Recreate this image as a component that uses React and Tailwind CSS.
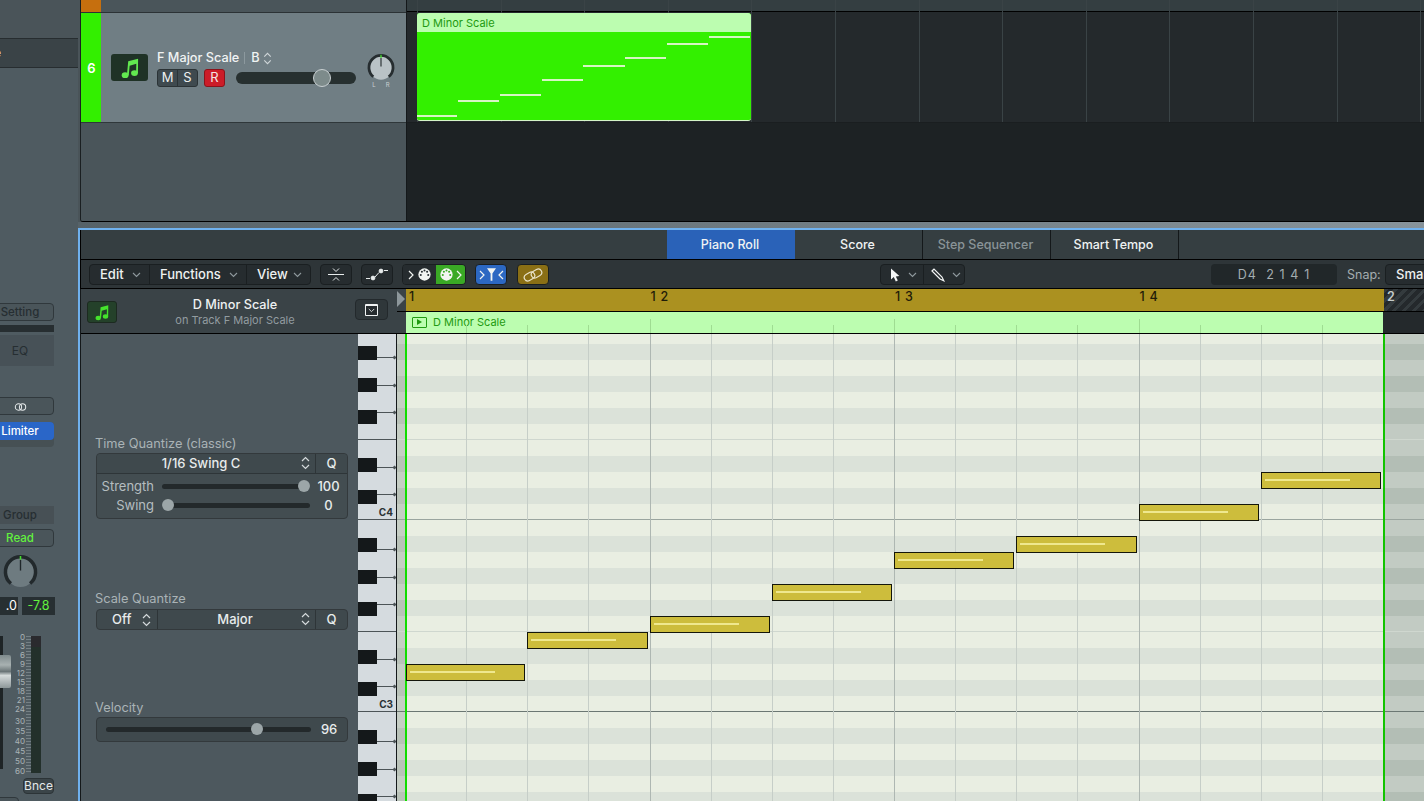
import React from "react";

function Note({ className }) {
  return (
    <svg viewBox="0 0 20 24" className={className} fill="currentColor">
      <ellipse cx="4.6" cy="20" rx="3.8" ry="3.2" />
      <ellipse cx="15" cy="17.6" rx="3.8" ry="3.2" />
      <path d="M6.6 20 L8 4.6 L19 1.6 L18.8 17.6 L16.8 17.6 L17 7.4 L9.6 9.4 L8.6 20 Z" />
    </svg>
  );
}

function UpDown({ className = "w-[9px] h-[14px] text-[#d5dadc]" }) {
  return (
    <svg viewBox="0 0 9 14" className={className} fill="none" stroke="currentColor" strokeWidth="1.2">
      <path d="M1 5 L4.5 1.5 L8 5 M1 9 L4.5 12.5 L8 9" />
    </svg>
  );
}

function Chev({ className = "w-[9px] h-[6px] text-[#8f999d]" }) {
  return (
    <svg viewBox="0 0 9 6" className={className} fill="none" stroke="currentColor" strokeWidth="1.1">
      <path d="M1 1 L4.5 4.5 L8 1" />
    </svg>
  );
}

function Din({ dark }) {
  const dot = dark ? "#3aa925" : "#2b3235";
  return (
    <svg viewBox="0 0 14 14" className="w-[13px] h-[13px]">
      <circle cx="7" cy="7" r="6.6" fill="#f2f5f2" />
      <circle cx="3" cy="7.6" r="1.1" fill={dot} />
      <circle cx="4.2" cy="4" r="1.1" fill={dot} />
      <circle cx="7" cy="2.8" r="1.1" fill={dot} />
      <circle cx="9.8" cy="4" r="1.1" fill={dot} />
      <circle cx="11" cy="7.6" r="1.1" fill={dot} />
    </svg>
  );
}

function Arrow({ flip }) {
  return (
    <svg viewBox="0 0 6 10" className="w-[6px] h-[10px]" fill="none" stroke="#f2f5f2" strokeWidth="1.2">
      <path d={flip ? "M5 1 L1 5 L5 9" : "M1 1 L5 5 L1 9"} />
    </svg>
  );
}

function Knob({ size, inner, ring }) {
  return (
    <svg viewBox="0 0 36 36" className={size}>
      <circle cx="18" cy="18" r="15" fill={inner} />
      <path d="M8.1 29.3 A15.5 15.5 0 1 1 27.9 29.3" fill="none" stroke={ring} strokeWidth="3.6" />
      <path d="M18 1 V5" stroke="#43e02c" strokeWidth="1.6" />
      <path d="M18 5 V16" stroke="#20272a" strokeWidth="1.4" />
    </svg>
  );
}

function Slider({ knob }) {
  return (
    <div className="relative flex-1 h-[5px] rounded-full bg-[#23292b]">
      <div className={"absolute -top-[4px] w-[12px] h-[12px] rounded-full bg-[#9ca6a8] " + knob} />
    </div>
  );
}

function Label({ children, className = "" }) {
  return <div className={"h-[16px] -ml-[1px] leading-[16px] text-[12.8px] text-[#aab3b6] " + className}>{children}</div>;
}

const barLines = [0, 1, 2, 3, 4, 5, 6, 7, 8, 9, 10, 11, 12];
const scaleMarks = [
  ["0", "h-[9px]"], ["3", "h-[9px]"], ["6", "h-[9px]"], ["9", "h-[9px]"], ["12", "h-[9px]"],
  ["15", "h-[9px]"], ["18", "h-[9px]"], ["21", "h-[9px]"], ["24", "h-[12px]"], ["30", "h-[10px]"],
  ["35", "h-[10px]"], ["40", "h-[10px]"], ["45", "h-[10px]"], ["50", "h-[10px]"], ["60", "h-[9px]"],
];
const miniNotes = [
  [0, 40, 102], [41, 41, 87], [83, 41, 81], [125, 41, 66], [166, 42, 52], [208, 41, 44], [250, 41, 30], [292, 41, 23],
];
const notes = [
  [9, 119, 330], [130, 121, 298], [253, 120, 282], [375, 120, 250],
  [497, 120, 218], [619, 121, 202], [742, 120, 170], [864, 120, 138],
];
// semitones above C3 for each row under the ruler, top row is cut off
const rows = Array.from({ length: 30 }, (_, i) => {
  const s = 23 - i;
  return { s, pc: ((s % 12) + 12) % 12, first: i === 0 };
});
const blackKeys = { 1: "top-[6px]", 3: "top-[11px]", 6: "top-[4px]", 8: "top-[9px]", 10: "top-[13px]" };

function MixerStrip() {
  const btn = "w-[68px] -ml-[14px] h-[18px] pt-[1px] rounded-[4px] border border-[#30383c] bg-[#4a555a] flex items-center justify-center";
  return (
    <div className="w-[78px] shrink-0 h-full bg-[#4f5b61] overflow-hidden flex flex-col text-[11.5px] text-[#bac2c5]">
      <div className="h-[39px] shrink-0 bg-[#4a5459] border-b border-[#272d30]" />
      <div className="h-[29px] shrink-0 bg-[#3a4347] border-b border-[#272d30] flex items-center -ml-[6px] text-[12px] text-white">e</div>
      <div className={btn + " mt-[235px] shrink-0 font-medium text-[#262e32]"}>Setting</div>
      <div className="w-[54px] h-[7px] mt-[4px] shrink-0 bg-[#272e31]" />
      <div className="w-[68px] -ml-[14px] h-[31px] pt-[1px] mt-[3px] shrink-0 bg-[#475157] flex items-center justify-center text-[12px] text-[#262e32]">EQ</div>
      <div className={btn + " mt-[31px] shrink-0"}>
        <svg viewBox="0 0 14 8" className="w-[13px] h-[8px]" fill="none" stroke="#e6eaeb" strokeWidth="1.1">
          <circle cx="4.8" cy="4" r="3.4" />
          <circle cx="9.2" cy="4" r="3.4" />
        </svg>
      </div>
      <div className="w-[68px] -ml-[14px] mt-[7px] h-[25px] shrink-0 rounded-[4px] bg-[#465054]">
        <div className="h-[18px] pt-[2px] rounded-[4px] bg-[#2a66c8] text-white font-medium flex items-center justify-center">Limiter</div>
      </div>
      <div className="w-[68px] -ml-[14px] h-[18px] pt-[2px] mt-[59px] shrink-0 bg-[#475055] flex items-center justify-center font-medium text-[#262e32]">Group</div>
      <div className={btn + " mt-[5px] shrink-0 font-medium text-[#62f23e]"}>Read</div>
      <div className="mt-[8px] ml-[3px] shrink-0 h-[35px]">
        <Knob size="w-[35px] h-[35px]" inner="#6e7b80" ring="#22292c" />
      </div>
      <div className="mt-[7px] h-[18px] shrink-0 flex gap-[4px] text-[12.5px]">
        <div className="w-[18px] bg-[#272f32] text-white text-right pr-[1px] leading-[18px]">.0</div>
        <div className="w-[33px] bg-[#272f32] text-[#62f23e] text-center leading-[18px]">-7.8</div>
      </div>
      <div className="mt-[21px] h-[137px] shrink-0 flex">
        <div className="relative w-[3px] h-[133px] bg-[#1e2426]">
          <div className="absolute left-0 top-[19px] w-[11px] h-[33px] rounded-r-[2px] bg-[linear-gradient(180deg,#7f8b8d,#a8b1b1_30%,#6a7577_50%,#d5dbdb_62%,#8d9799)]" />
        </div>
        <div className="w-[23px] -mt-[3px] flex flex-col items-end text-[8px] text-[#aab3b6]">
          {scaleMarks.map(([t, h]) => (
            <div key={t} className={h + " shrink-0 leading-[9px] pr-[1px]"}>{t}</div>
          ))}
        </div>
        <div className="w-[5px] bg-[repeating-linear-gradient(180deg,#8f9a9e_0,#8f9a9e_1px,transparent_1px,transparent_3px)] opacity-60" />
        <div className="w-[10px] bg-[#23302b]">
          <div className="h-[11px] bg-[#2a2a2e]" />
        </div>
      </div>
      <div className="mt-[5px] ml-[23px] w-[31px] h-[16px] shrink-0 rounded-[4px] border border-[#2c3437] bg-[#3b4549] flex items-center justify-center text-[12px] text-[#e4e8e9]">Bnce</div>
      <div className="mt-[3px] -ml-[6px] w-[25px] h-[10px] shrink-0 rounded-[4px] border border-[#30383c] bg-[#4a555a]" />
    </div>
  );
}

function Tracks() {
  return (
    <div className="h-[222px] shrink-0 flex rounded-bl-[3px] overflow-hidden border-b border-black border-l border-l-[#1a1f21]">
      <div className="w-[326px] shrink-0 flex flex-col bg-[#4a555a] border-r border-[#14181a]">
        <div className="h-[13px] shrink-0 flex border-b border-[#2b3235]">
          <div className="w-[20px] bg-[#c66f0e]" />
        </div>
        <div className="h-[110px] shrink-0 flex bg-[#707e84] border-b border-[#2f373a]">
          <div className="w-[20px] pt-[3px] pl-[1px] bg-[#33ef00] flex items-center justify-center text-[13px] font-semibold text-white">6</div>
          <div className="w-[37px] h-[27px] ml-[10px] mt-[41px] rounded-[3px] bg-[#1f3226] flex items-center justify-center text-[#62e850]">
            <Note className="w-[18px] h-[22px]" />
          </div>
          <div className="ml-[9px] mt-[36px] w-[120px]">
            <div className="h-[18px] flex items-center text-[12.7px] font-medium whitespace-nowrap text-[#f0f3f3]">
              F Major Scale
              <span className="ml-[5px] mr-[6px] w-px h-[12px] bg-[#8c999e]" />
              B
              <UpDown className="ml-[3px] w-[9px] h-[13px] text-[#cfd6d8]" />
            </div>
            <div className="flex mt-[2px]">
              <div className="flex w-[41px] h-[18px] rounded-[3px] border border-[#2b3336] bg-[#3f4a4f] text-[13px] text-[#eef1f1] divide-x divide-[#2b3336]">
                <div className="flex-1 flex items-center justify-center">M</div>
                <div className="flex-1 flex items-center justify-center">S</div>
              </div>
              <div className="ml-[6px] w-[21px] h-[18px] rounded-[3px] border border-[#8c121a] bg-[#cc1c28] text-[13px] text-[#f6e4e4] flex items-center justify-center">R</div>
            </div>
          </div>
          <div className="relative w-[120px] h-[12px] -ml-[41px] mt-[59px] rounded-full bg-[#273030]">
            <div className="absolute left-[77px] -top-[3px] w-[18px] h-[18px] rounded-full bg-[#7d8b8b] border-[1.5px] border-[#c9d0d2]" />
          </div>
          <div className="ml-[11px] mt-[41px] w-[28px]">
            <Knob size="w-[28px] h-[28px]" inner="#b9c2c6" ring="#262d30" />
            <div className="flex justify-center gap-[10px] text-[6px] leading-[6px] text-[#c9d0d2]">
              <span>L</span>
              <span>R</span>
            </div>
          </div>
        </div>
      </div>
      <div className="relative flex-1 flex flex-col bg-[#1d2224]">
        <div className="h-[12px] shrink-0 bg-[#343e41] border-b border-black" />
        <div className="h-[111px] shrink-0 bg-[#24292c] border-b border-[#1a1e20]" />
        <div className="absolute inset-x-0 top-0 h-[122px] pl-[10px] flex">
          {barLines.map((i) => (
            <div key={i} className="w-[83.6px] shrink-0 border-l border-[#3a4346]" />
          ))}
        </div>
        <div className="absolute left-[10px] top-[13px] w-[334px] h-[108px] rounded-[3px] overflow-hidden border-b border-[#d5f5c8] flex flex-col bg-[#33f000]">
          <div className="h-[19px] shrink-0 bg-[#bcfdb0] pl-[5px] pt-[1px] text-[11px] leading-[19px] text-[#1f9a10]">D Minor Scale</div>
          <div className="relative flex-1">
            {miniNotes.map(([x, w, y]) => (
              <div key={x} className="absolute h-[2px] bg-[#d6f5c4]" style={{ left: x, width: w, top: y - 19 - 0 }} />
            ))}
          </div>
        </div>
      </div>
    </div>
  );
}

function Toolbar() {
  const box = "w-[32px] h-[21px] rounded-[4px] border border-[#1a1f21] flex items-center justify-center shrink-0";
  return (
    <div className="h-[29px] shrink-0 pl-[8px] pt-[4px] bg-[#2e3538] border-b border-black flex items-start overflow-hidden text-[13px] text-[#eef1f1] font-medium">
      <div className="w-[222px] h-[21px] shrink-0 rounded-[4px] border border-[#1a1f21] bg-[#262c2f] flex divide-x divide-[#1a1f21]">
        <div className="w-[60px] flex items-center pl-[10px] justify-between pr-[8px]">Edit<Chev /></div>
        <div className="w-[97px] flex items-center pl-[10px] justify-between pr-[8px]">Functions<Chev /></div>
        <div className="flex-1 flex items-center pl-[10px] justify-between pr-[8px]">View<Chev /></div>
      </div>
      <div className={box + " ml-[9px] bg-[#262c2f]"}>
        <svg viewBox="0 0 16 15" className="w-[16px] h-[15px]" fill="none" stroke="#e8ecec" strokeWidth="1">
          <path d="M5 1.5 L8 4.5 L11 1.5 M0 7.5 H16 M5 13.5 L8 10.5 L11 13.5" />
        </svg>
      </div>
      <div className={box + " ml-[9px] bg-[#262c2f]"}>
        <svg viewBox="0 0 24 13" className="w-[24px] h-[13px]" fill="none" stroke="#e8ecec" strokeWidth="1">
          <path d="M1 10.5 H5 M10 9 L14 4.5 M19 2.5 H23" />
          <circle cx="8" cy="10" r="1.9" fill="#e8ecec" />
          <circle cx="16" cy="3" r="1.9" fill="#e8ecec" />
        </svg>
      </div>
      <div className="w-[64px] h-[21px] ml-[9px] shrink-0 rounded-[4px] border border-[#1a1f21] overflow-hidden flex">
        <div className="w-[33px] bg-[#262c2f] flex items-center justify-center gap-[4px]"><Arrow /><Din /></div>
        <div className="flex-1 bg-[#3aa925] flex items-center justify-center gap-[3px]"><Din dark /><Arrow /></div>
      </div>
      <div className={box + " ml-[9px] bg-[#2c68c2]"}>
        <div className="flex items-center gap-[2px]">
          <Arrow />
          <svg viewBox="0 0 10 14" className="w-[9px] h-[13px]" fill="#f2f5f2">
            <path d="M0 0 H10 L6 6 V14 H4 V6 Z" />
          </svg>
          <Arrow flip />
        </div>
      </div>
      <div className={box + " ml-[10px] bg-[#8a6f15]"}>
        <svg viewBox="0 0 20 14" className="w-[20px] h-[14px]" fill="none" stroke="#e8e2c8" strokeWidth="1.2">
          <rect x="1" y="5" width="11" height="7" rx="3.5" transform="rotate(-30 6.5 8.5)" />
          <rect x="8" y="2" width="11" height="7" rx="3.5" transform="rotate(-30 13.5 5.5)" />
        </svg>
      </div>
      <div className="ml-[331px] w-[85px] h-[21px] shrink-0 rounded-[4px] border border-[#1a1f21] bg-[#262c2f] flex divide-x divide-[#1a1f21]">
        <div className="w-[43px] flex items-center pl-[9px] gap-[8px]">
          <svg viewBox="0 0 10 14" className="w-[10px] h-[14px]" fill="#f4f6f6">
            <path d="M1 0.5 V11.5 L3.8 9 L5.8 13.5 L7.8 12.6 L5.8 8.4 L9.4 8 Z" />
          </svg>
          <Chev />
        </div>
        <div className="flex-1 flex items-center pl-[7px] gap-[7px]">
          <svg viewBox="0 0 14 14" className="w-[14px] h-[14px]" fill="none" stroke="#f4f6f6" strokeWidth="1.2">
            <path d="M1 3 L3 1 L11 9 L12.8 12.8 L9 11 Z" />
          </svg>
          <Chev />
        </div>
      </div>
      <div className="ml-[246px] w-[126px] h-[21px] pt-[1px] shrink-0 rounded-[4px] bg-[#212729] flex items-center justify-center text-[12.5px] font-normal tracking-[1.1px] text-[#a4adb0]">D4&nbsp;&nbsp;2 1 4 1</div>
      <div className="ml-[10px] w-[38px] shrink-0 h-[21px] leading-[22px] text-[12.5px] font-normal text-[#a4adb0]">Snap:</div>
      <div className="w-[60px] h-[21px] shrink-0 rounded-[4px] border border-[#1a1f21] bg-[#262c2f] pl-[10px] leading-[19px]">Smart</div>
    </div>
  );
}

function Inspector() {
  const panel = "w-[252px] rounded-[4px] border border-[#33393c]";
  return (
    <div className="w-[277px] shrink-0 bg-[#4d585e] pl-[15px] text-[#e8ecec] overflow-hidden">
      <Label className="mt-[102px]">Time Quantize (classic)</Label>
      <div className={panel + " mt-[1px] bg-[#434d51]"}>
        <div className="h-[20px] flex items-center bg-[#3f494d] rounded-t-[4px] border-b border-[#2e3538] text-[13px] font-medium">
          <div className="flex-1 relative flex justify-center pr-[10px]">
            1/16 Swing C
            <UpDown className="absolute right-[5px] top-[2px] w-[9px] h-[14px] text-[#d5dadc]" />
          </div>
          <div className="w-[32px] h-full border-l border-[#2e3538] flex items-center justify-center">Q</div>
        </div>
        <div className="h-[44px] pt-[3px] text-[13px]">
          <div className="h-[19px] flex items-center">
            <div className="w-[57px] text-right text-[#b5bdc0]">Strength</div>
            <div className="ml-[8px] flex-1 flex"><Slider knob="left-[136px]" /></div>
            <div className="w-[37px] text-center font-medium">100</div>
          </div>
          <div className="h-[19px] flex items-center">
            <div className="w-[57px] text-right text-[#b5bdc0]">Swing</div>
            <div className="ml-[8px] flex-1 flex"><Slider knob="left-0" /></div>
            <div className="w-[37px] text-center font-medium">0</div>
          </div>
        </div>
      </div>
      <Label className="mt-[72px]">Scale Quantize</Label>
      <div className={panel + " mt-[2px] h-[21px] flex items-center bg-[#3f494d] text-[13px] font-medium"}>
        <div className="w-[61px] h-full border-r border-[#2e3538] flex items-center gap-[11px] pl-[15px]">
          Off
          <UpDown />
        </div>
        <div className="flex-1 relative flex justify-center pr-[3px]">
          Major
          <UpDown className="absolute right-[5px] top-[2px] w-[9px] h-[14px] text-[#d5dadc]" />
        </div>
        <div className="w-[32px] h-full border-l border-[#2e3538] flex items-center justify-center">Q</div>
      </div>
      <Label className="mt-[70px]">Velocity</Label>
      <div className={panel + " mt-[1px] h-[25px] bg-[#3f494d] flex items-center pl-[9px] text-[13px] font-medium"}>
        <div className="w-[206px] flex"><Slider knob="left-[145px]" /></div>
        <div className="w-[36px] text-center">96</div>
      </div>
    </div>
  );
}

function Piano() {
  return (
    <div className="w-[39px] shrink-0 bg-[#d5dbdf] border-r-[1.5px] border-[#14181a] flex flex-col overflow-hidden">
      {rows.map((r) => {
        const line = blackKeys[r.pc];
        const wide = r.pc === 0 || r.pc === 5;
        return (
          <div key={r.s} className={"relative shrink-0 " + (r.first ? "h-[10px] " : "h-[16px] ") + (wide ? "border-b border-[#4c5457]" : "")}>
            {line && <div className="absolute left-0 bottom-0 w-[19px] h-[14px] bg-[#14181a]" />}
            {line && (
              <div className={"absolute left-[19px] right-0 h-px bg-[#4c5457] " + line}>
                <div className="absolute right-0 -top-[1px] w-[3px] h-[3px] rotate-45 bg-[#4c5457]" />
              </div>
            )}
            {r.s === 12 && <div className="absolute right-[3px] bottom-0 text-[10px] leading-[13px] font-bold text-[#2b3235]">C4</div>}
            {r.s === 0 && <div className="absolute right-[3px] bottom-0 text-[10px] leading-[13px] font-bold text-[#2b3235]">C3</div>}
          </div>
        );
      })}
    </div>
  );
}

function NoteGrid() {
  return (
    <div className="relative flex-1 overflow-hidden flex flex-col">
      {rows.map((r) => {
        const dark = blackKeys[r.pc];
        const line =
          r.s === 0 ? " border-b border-[#6b7773]" : r.s === 12 ? " border-b border-[#9aa59f]" : r.pc === 5 ? " border-b border-[#cfd7cf]" : "";
        return (
          <div key={r.s} className={"shrink-0 flex " + (r.first ? "h-[10px]" : "h-[16px]") + line}>
            <div className={"w-[9px] " + (dark ? "bg-[#b9c2b9]" : "bg-[#c6cec5]")} />
            <div className={"w-[977px] " + (dark ? "bg-[#dbe2d9]" : "bg-[#e9eee2]")} />
            <div className={"flex-1 " + (dark ? "bg-[#b3beb5]" : "bg-[#c2cbc3]")} />
          </div>
        );
      })}
      <div className="absolute left-[8px] top-0 bottom-0 w-[978px] flex">
        {Array.from({ length: 16 }, (_, i) => (
          <div key={i} className={"flex-1 border-l " + (i % 4 === 0 ? "border-[#aeb7b2]" : "border-[#c6cec8]")} />
        ))}
      </div>
      <div className="absolute left-[8px] top-0 bottom-0 w-[2px] bg-[#12dd00]" />
      <div className="absolute left-[986px] top-0 bottom-0 w-[2px] bg-[#12c400]" />
      {notes.map(([x, w, y]) => (
        <div key={x} className="absolute h-[17px] bg-[#cdbd3c] border-[1.5px] border-[#14160a]" style={{ left: x, width: w, top: y }}>
          <div className="ml-[3px] mt-[6px] w-[85px] h-[2px] bg-[#efe88e]" />
        </div>
      ))}
    </div>
  );
}

export default function App() {
  const ticks = Array.from({ length: 16 }, (_, i) => i);
  return (
    <div className="w-[1424px] h-[801px] overflow-hidden flex bg-[#4a5459] font-['Inter',sans-serif]">
      <MixerStrip />
      <div className="flex-1 min-w-0 flex flex-col bg-[#4a5459]">
        <div className="pl-[2px] shrink-0"><Tracks /></div>
        <div className="h-[6px] shrink-0 bg-[linear-gradient(90deg,#566268,#87939a)]" />
        <div className="flex-1 min-h-0 flex flex-col border-t-2 border-l-2 border-[#6fb1ee]">
          <div className="h-[30px] shrink-0 pl-[586px] pt-0 bg-[#353e41] border-b border-l border-black flex text-[12.5px] font-medium text-[#f0f3f3]">
            <div className="w-[128px] pt-[1px] pr-[2px] bg-[#2a62b8] flex items-center justify-center">Piano Roll</div>
            <div className="w-[128px] pt-[1px] pr-[2px] border-r border-[#14181a] flex items-center justify-center">Score</div>
            <div className="w-[128px] pt-[1px] pr-[2px] border-r border-[#14181a] flex items-center justify-center text-[#8a9498]">Step Sequencer</div>
            <div className="w-[128px] pt-[1px] pr-[2px] border-r border-[#14181a] flex items-center justify-center">Smart Tempo</div>
          </div>
          <div className="border-l border-black shrink-0 flex flex-col"><Toolbar /></div>
          <div className="flex-1 min-h-0 flex border-l border-[#14181a]">
            <div className="w-[316px] shrink-0 flex flex-col">
              <div className="h-[45px] shrink-0 bg-[#3a4347] border-b border-black flex items-start">
                <div className="ml-[6px] mt-[12px] w-[30px] h-[22px] rounded-[3px] border border-[#1c2a20] bg-[#24412a] flex items-center justify-center text-[#45e32c]">
                  <Note className="w-[14px] h-[17px]" />
                </div>
                <div className="w-[236px] pt-[8px] text-center">
                  <div className="h-[16px] leading-[16px] text-[12.7px] font-medium text-[#eef1f1]">D Minor Scale</div>
                  <div className="h-[15px] leading-[14px] text-[11px] text-[#929ca0]">on Track F Major Scale</div>
                </div>
                <div className="mt-[10px] ml-[2px] w-[33px] h-[21px] rounded-[4px] border border-[#23292c] bg-[#2f373a] flex items-center justify-center">
                  <div className="w-[13px] h-[12px] rounded-[1px] bg-[#262c2f] border border-[#f0f3f3] border-t-[2.5px] flex items-center justify-center">
                    <Chev className="w-[7px] h-[5px] text-[#f0f3f3]" />
                  </div>
                </div>
              </div>
              <div className="flex-1 min-h-0 flex">
                <Inspector />
                <Piano />
              </div>
            </div>
            <div className="flex-1 min-w-0 flex flex-col">
              <div className="h-[23px] shrink-0 flex border-b border-black">
                <div className="w-[9px] bg-[#3a4347] flex items-start pt-[2px]">
                  <div className="w-0 h-0 border-y-[8px] border-y-transparent border-l-[8px] border-l-[#8d979b]" />
                </div>
                <div className="w-[978px] bg-[#ab9120] flex text-[12.5px] font-medium tracking-[0.8px] text-[#1f1c08] leading-[15px]">
                  <div className="w-[244.5px] pl-[3px]">1</div>
                  <div className="w-[244.5px]">1 2</div>
                  <div className="w-[244.5px]">1 3</div>
                  <div className="w-[244.5px]">1 4</div>
                </div>
                <div className="flex-1 pl-[3px] text-[12.5px] font-semibold leading-[15px] text-[#c5cccd] bg-[repeating-linear-gradient(135deg,#343b3e_0,#343b3e_3px,#24292c_3px,#24292c_7px)]">2</div>
              </div>
              <div className="h-[22px] shrink-0 flex border-b border-black">
                <div className="w-[9px] bg-[#3a4347]" />
                <div className="relative w-[977px] bg-[#bcfdb0] flex items-center pb-[1px] text-[11px] text-[#1f9a10]">
                  <div className="ml-[6px] w-[15px] h-[11px] border border-[#1f9a10] rounded-[1px] flex items-center justify-center">
                    <div className="w-0 h-0 border-y-[3px] border-y-transparent border-l-[5px] border-l-[#1f9a10]" />
                  </div>
                  <span className="ml-[6px]">D Minor Scale</span>
                  <div className="absolute inset-0 flex -ml-[1px]">
                    {ticks.map((i) => (
                      <div key={i} className="flex-1 flex items-end">
                        <div className={"w-px bg-[#9fdc92] " + (i % 4 === 0 ? (i ? "h-[14px]" : "") : "h-[8px]")} />
                      </div>
                    ))}
                  </div>
                </div>
                <div className="flex-1 bg-[#24292c]" />
              </div>
              <NoteGrid />
            </div>
          </div>
        </div>
      </div>
    </div>
  );
}
